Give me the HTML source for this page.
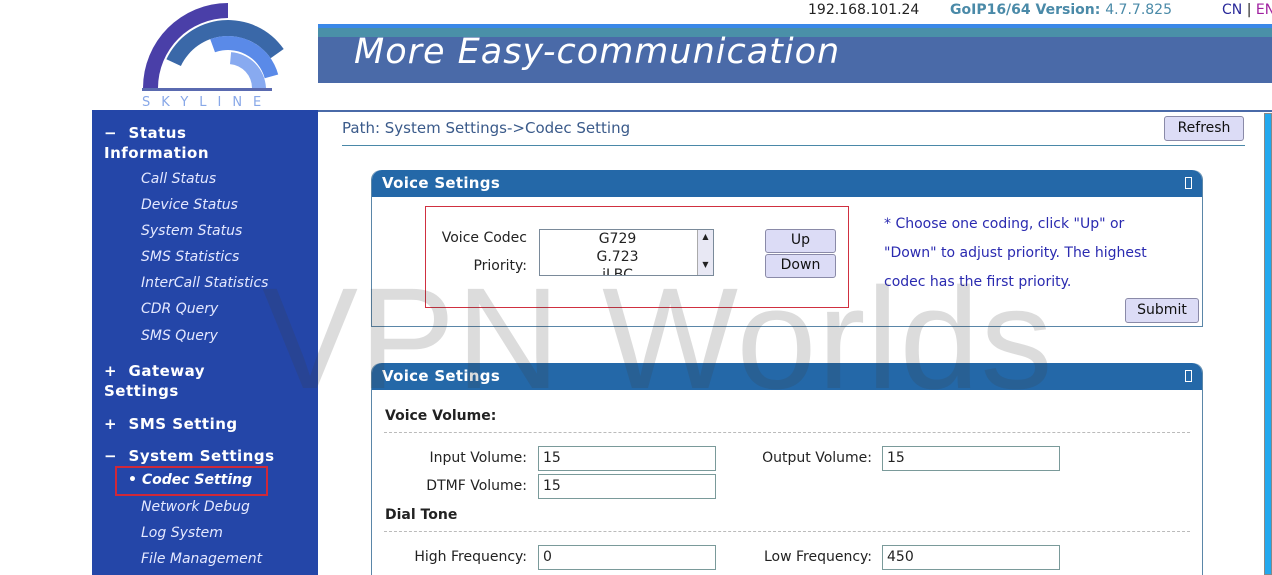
<!DOCTYPE html>
<html><head><meta charset="utf-8"><style>
*{box-sizing:border-box;margin:0;padding:0}
body{width:1272px;height:575px;overflow:hidden;background:#fff;font-family:"DejaVu Sans","Liberation Sans",sans-serif;position:relative;color:#222}
.abs{position:absolute}
.side{left:92px;top:110px;width:226px;height:465px;background:#2446a8;color:#fff}
.side .h{position:absolute;font-weight:bold;font-size:15px;letter-spacing:.5px;line-height:20px}
.side .i{position:absolute;left:49px;font-style:italic;font-size:14px;color:#e4e8ff}
.btn{position:absolute;background:#dcdcf6;border:1px solid #8a8aa8;border-radius:3px;font-size:14px;text-align:center;color:#111}
.panel{position:absolute;left:371px;width:832px;border:1px solid #5a86a8;border-top:none;border-radius:10px 10px 0 0}
.ph{height:27px;background:#2468a8;color:#fff;font-weight:bold;font-size:15px;padding:4px 10px;border-radius:10px 10px 0 0;letter-spacing:.3px;position:relative}
.ph i{position:absolute;right:10px;top:7px;width:7px;height:12px;border:1.5px solid #fff;font-style:normal}
.lbl{position:absolute;font-size:14px;text-align:right;color:#222}
.inp{position:absolute;width:178px;height:25px;border:1px solid #7a9a9a;font-size:14px;padding:3px 4px}
.dash{position:absolute;left:12px;right:12px;border-top:1px dashed #bbb}
</style></head><body>
<svg class="abs" style="left:138px;top:0" width="150" height="110" viewBox="0 0 150 110">
<path d="M5 88 A85 85 0 0 1 90 3 L90 18 A70 70 0 0 0 20 88Z" fill="#4a3fa8"/>
<path d="M28.4 59.3 A68 68 0 0 1 145.7 49 L132.6 58.2 A52 52 0 0 0 42.9 66Z" fill="#3a68a8"/>
<path d="M72.2 39.1 A52 52 0 0 1 140.2 74.5 L126.7 78.2 A38 38 0 0 0 77 52.3Z" fill="#5a8ae8"/>
<path d="M93.1 52.1 A38 38 0 0 1 128 88 L114 88 A24 24 0 0 0 92 64.1Z" fill="#88aaf0"/>
<rect x="4" y="88" width="130" height="3" fill="#5a6ab0"/>
<text x="4" y="106" font-family="DejaVu Sans" font-size="13" fill="#88a8e8" letter-spacing="11">SKYLINE</text>
</svg>
<div class="abs" style="left:808px;top:2px;font-size:14px;white-space:nowrap">192.168.101.24</div>
<div class="abs" style="left:950px;top:2px;font-size:14px;color:#4a8aa8;font-weight:bold;white-space:nowrap">GoIP16/64 Version: <span style="font-weight:normal">4.7.7.825</span></div>
<div class="abs" style="left:1222px;top:2px;font-size:14px;color:#2a2a9a;white-space:nowrap">CN <span style="color:#222">|</span> <span style="color:#a020a0">EN</span></div>
<div class="abs" style="left:318px;top:24px;width:954px;height:59px;background:#4a6aa8">
<div style="height:4px;background:#3a88e8"></div><div style="height:9px;background:#4a90a8"></div>
<div class="abs" style="left:36px;top:8px;color:#fff;font-style:italic;font-size:35px;letter-spacing:1px">More Easy-communication</div></div>
<div class="abs" style="left:318px;top:110px;width:954px;border-top:2px solid #4a6aa8"></div>
<div class="abs side">
<div class="h" style="left:12px;top:13px">&minus;&nbsp; Status<br>Information</div>
<div class="i" style="top:61px">Call Status</div>
<div class="i" style="top:87px">Device Status</div>
<div class="i" style="top:113px">System Status</div>
<div class="i" style="top:139px">SMS Statistics</div>
<div class="i" style="top:165px">InterCall Statistics</div>
<div class="i" style="top:191px">CDR Query</div>
<div class="i" style="top:218px">SMS Query</div>
<div class="h" style="left:12px;top:251px">+&nbsp; Gateway<br>Settings</div>
<div class="h" style="left:12px;top:304px">+&nbsp; SMS Setting</div>
<div class="h" style="left:12px;top:336px">&minus;&nbsp; System Settings</div>
<div class="abs" style="left:23px;top:356px;width:153px;height:30px;border:2px solid #d02838"></div>
<div class="i" style="top:362px;left:36px;font-weight:bold;color:#fff">&bull; Codec Setting</div>
<div class="i" style="top:389px">Network Debug</div>
<div class="i" style="top:415px">Log System</div>
<div class="i" style="top:441px">File Management</div>
</div>
<div class="abs" style="left:342px;top:119px;font-size:15px;color:#3a5a8a">Path: System Settings-&gt;Codec Setting</div>
<div class="abs" style="left:342px;top:145px;width:903px;border-top:1.5px solid #4a88a8"></div>
<div class="btn" style="left:1164px;top:116px;width:80px;height:25px;padding-top:3px">Refresh</div>
<div class="abs" style="left:1264px;top:113px;width:8px;height:462px;background:#22a8ee;border:1px solid #888"></div>
<div class="panel" style="top:170px;height:157px"><div class="ph">Voice Setings<i></i></div></div>
<div class="abs" style="left:425px;top:206px;width:424px;height:102px;border:1.5px solid #d03040"></div>
<div class="lbl" style="left:420px;top:230px;width:107px">Voice Codec</div>
<div class="lbl" style="left:420px;top:258px;width:107px">Priority:</div>
<div class="abs" style="left:539px;top:229px;width:175px;height:47px;border:1px solid #7a8a9a;overflow:hidden;font-size:14px;text-align:center;line-height:18px;padding-right:18px">G729<br>G.723<br>iLBC
<div class="abs" style="right:0;top:0;width:16px;height:45px;background:#e8e8f4;border-left:1px solid #aaa;font-size:8px;line-height:14px">&#9650;<br><br>&#9660;</div></div>
<div class="btn" style="left:765px;top:229px;width:71px;height:24px;padding-top:2px">Up</div>
<div class="btn" style="left:765px;top:254px;width:71px;height:24px;padding-top:2px">Down</div>
<div class="abs" style="left:884px;top:210px;font-size:14px;color:#2a2ab0;line-height:29px">* Choose one coding, click "Up" or<br>"Down" to adjust priority. The highest<br>codec has the first priority.</div>
<div class="btn" style="left:1125px;top:298px;width:74px;height:25px;padding-top:3px">Submit</div>
<div class="panel" style="top:363px;height:212px;border-bottom:none"><div class="ph">Voice Setings<i></i></div>
<div class="abs" style="left:13px;top:45px;font-weight:bold;font-size:14px">Voice Volume:</div>
<div class="dash" style="top:69px"></div>
<div class="abs" style="left:13px;top:144px;font-weight:bold;font-size:14px">Dial Tone</div>
<div class="dash" style="top:168px"></div>
</div>
<div class="lbl" style="left:380px;top:450px;width:147px">Input Volume:</div>
<div class="inp" style="left:538px;top:446px">15</div>
<div class="lbl" style="left:380px;top:478px;width:147px">DTMF Volume:</div>
<div class="inp" style="left:538px;top:474px">15</div>
<div class="lbl" style="left:720px;top:450px;width:152px">Output Volume:</div>
<div class="inp" style="left:882px;top:446px">15</div>
<div class="lbl" style="left:380px;top:549px;width:147px">High Frequency:</div>
<div class="inp" style="left:538px;top:545px">0</div>
<div class="lbl" style="left:720px;top:549px;width:152px">Low Frequency:</div>
<div class="inp" style="left:882px;top:545px">450</div>
<div class="abs" style="left:262px;top:256px;font-size:144px;color:rgba(60,60,60,0.18);font-family:'Liberation Sans',sans-serif;letter-spacing:1px;white-space:nowrap">VPN Worlds</div>
</body></html>
